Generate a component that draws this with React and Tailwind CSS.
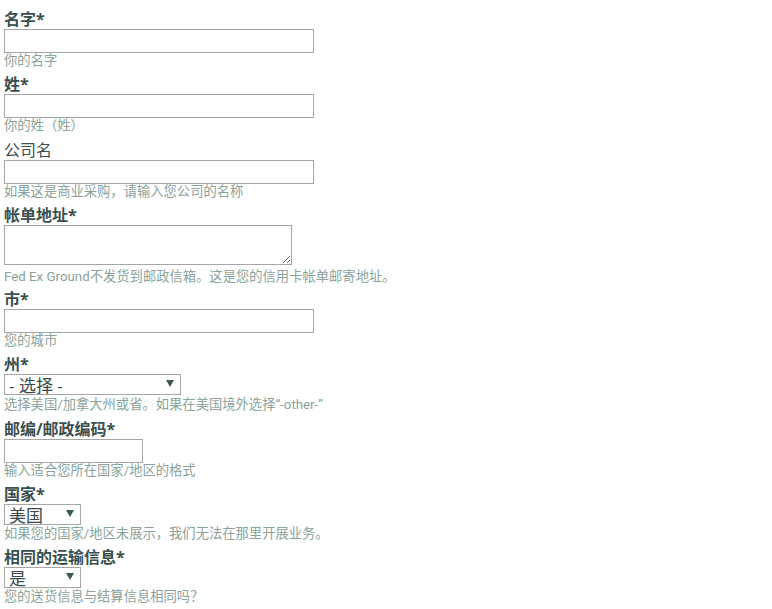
import { useState } from "react";

const font = { fontFamily: '"Open Sans", "Noto Sans CJK SC", sans-serif' };

function Label({ children, bold = true }) {
  return (
    <div className={`text-[16px] leading-[20px] text-[#3a5050] ${bold ? "font-bold" : "font-normal"}`}>
      {children}
    </div>
  );
}

function Help({ children }) {
  return (
    <div className="font-['Roboto','Noto_Sans_CJK_SC',sans-serif] text-[13.3px] leading-[15px] text-[#8aa39b]">
      {children}
    </div>
  );
}

function TextField({ width }) {
  return (
    <input
      type="text"
      className={`block h-[24px] ${width} border border-[#a6a6a6] bg-white px-1 text-[14px] outline-none`}
    />
  );
}

function Select({ width, value, options }) {
  const [v, setV] = useState(value);
  return (
    <div className={`relative ${width} h-[21px]`}>
      <select
        value={v}
        onChange={(e) => setV(e.target.value)}
        className="block h-full w-full appearance-none border border-[#a6a6a6] bg-white pl-[4px] pt-[1px] text-[17px] leading-[19px] text-[#3a4a4a] outline-none"
      >
        {options.map((o) => (
          <option key={o}>{o}</option>
        ))}
      </select>
      <span className="pointer-events-none absolute right-[7px] top-[6px] h-0 w-0 border-x-[4px] border-t-[7px] border-x-transparent border-t-[#3a5a50]" />
    </div>
  );
}

export default function App() {
  return (
    <div className="min-h-screen bg-white pl-[4px] pt-[9px]" style={font}>
      <div className="mb-[6px]">
        <Label>名字*</Label>
        <TextField width="w-[310px]" />
        <Help>你的名字</Help>
      </div>
      <div className="mb-[7px]">
        <Label>姓*</Label>
        <TextField width="w-[310px]" />
        <Help>你的姓（姓）</Help>
      </div>
      <div className="mb-[6px]">
        <Label bold={false}>公司名</Label>
        <TextField width="w-[310px]" />
        <Help>如果这是商业采购，请输入您公司的名称</Help>
      </div>
      <div className="mb-[5px]">
        <Label>帐单地址*</Label>
        <textarea className="block h-[40px] w-[288px] border border-[#a6a6a6] bg-white outline-none" />
        <Help>
          <span className="mt-[4px] block">Fed Ex Ground不发货到邮政信箱。这是您的信用卡帐单邮寄地址。</span>
        </Help>
      </div>
      <div className="mb-[6px]">
        <Label>市*</Label>
        <TextField width="w-[310px]" />
        <Help>您的城市</Help>
      </div>
      <div className="mb-[7px]">
        <Label>州*</Label>
        <Select width="w-[177px]" value="- 选择 -" options={["- 选择 -", "-other-"]} />
        <Help>
          <span className="mt-[2px] block">选择美国/加拿大州或省。如果在美国境外选择“-other-”</span>
        </Help>
      </div>
      <div className="mb-[6px]">
        <Label>邮编/邮政编码*</Label>
        <TextField width="w-[139px]" />
        <Help>输入适合您所在国家/地区的格式</Help>
      </div>
      <div className="mb-[6px]">
        <Label>国家*</Label>
        <Select width="w-[77px]" value="美国" options={["美国", "加拿大"]} />
        <Help>
          <span className="mt-[1px] block">如果您的国家/地区未展示，我们无法在那里开展业务。</span>
        </Help>
      </div>
      <div>
        <Label>相同的运输信息*</Label>
        <Select width="w-[77px]" value="是" options={["是", "否"]} />
        <Help>
          <span className="mt-[1px] block">您的送货信息与结算信息相同吗？</span>
        </Help>
      </div>
    </div>
  );
}
